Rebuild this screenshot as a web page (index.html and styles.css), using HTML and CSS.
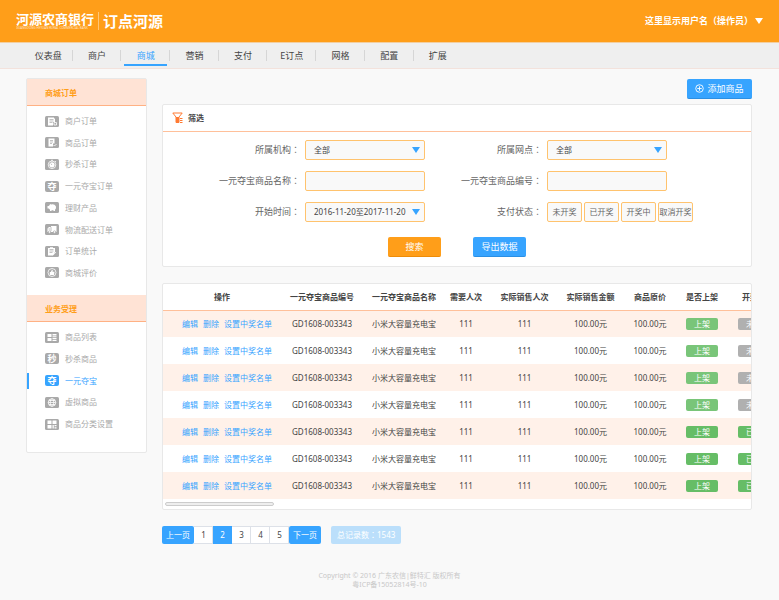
FILE: index.html
```html
<!DOCTYPE html>
<html lang="zh-CN">
<head>
  <meta charset="UTF-8">
  <meta name="viewport" content="width=device-width, initial-scale=1.0">
  <title>一元夺宝</title>
  <link rel="stylesheet" href="styles.css">
</head>
<body>
  <header class="header">
    <div class="logo">
      <div class="bank">
        <strong>河源农商银行</strong>
        <small>GUANGDONG HEYUAN RURAL COMMERCIAL BANK</small>
      </div>
      <span class="product">订点河源</span>
    </div>
    <button class="user" type="button">这里显示用户名<span class="punct" lang="zh-TW">（</span>操作员<span class="punct" lang="zh-TW">）</span><i class="caret"></i></button>
  </header>

  <nav class="nav">
    <a href="#">仪表盘</a>
    <a href="#">商户</a>
    <a href="#" class="active">商城</a>
    <a href="#">营销</a>
    <a href="#">支付</a>
    <a href="#">E订点</a>
    <a href="#">网格</a>
    <a href="#">配置</a>
    <a href="#">扩展</a>
  </nav>

  <div class="layout">
    <aside class="sidebar">
      <h2>商城订单</h2>
      <ul class="menu menu-orders">
        <li><a href="#"><svg class="icon" viewBox="0 0 14 11"><rect width="14" height="11" rx="1.5"/><path class="w" d="M3 1.500h6v1h1v3.500H8v3.500H3z"/><path class="g" d="M4.500 3.500h4M4.500 5h4M4.500 6.500h3"/><path class="l" d="M9 6.500h2.500v2.500H9z"/></svg>商户订单</a></li>
        <li><a href="#"><svg class="icon" viewBox="0 0 14 11"><rect width="14" height="11" rx="1.5"/><path class="w" d="M3.500 1.500h6v5H8v3H3.500z"/><path class="g" d="M5 3.500h3M5 5h3M5 6.500h2"/><path class="l" d="M8.500 8l1 1 2-2"/></svg>商品订单</a></li>
        <li><a href="#"><svg class="icon" viewBox="0 0 14 11"><rect width="14" height="11" rx="1.5"/><circle class="l" cx="7" cy="5.800" r="3.800"/><circle class="w" cx="7" cy="5.800" r="2.600"/><path class="l" d="M6 1.300h2M10 2l1 1"/><path class="g" d="M7 6L5.800 4.500"/></svg>秒杀订单</a></li>
        <li><a href="#"><span class="icon glyph">夺</span>一元夺宝订单</a></li>
        <li><a href="#"><svg class="icon" viewBox="0 0 14 11"><rect width="14" height="11" rx="1.5"/><path class="w" d="M2.500 4h1.200l1-1 .3-1 1.200.6Q8 2 9.500 2.800 11.500 4 11 6.200L10 7.800V9H8.500V8.300H6.500V9H5V7.800L3.800 6.500H2.500z"/></svg>理财产品</a></li>
        <li><a href="#"><svg class="icon" viewBox="0 0 14 11"><rect width="14" height="11" rx="1.5"/><path class="w" d="M2.500 4.500L4 3h2V2h5.500v6h-9z"/><path class="g" d="M6 3v4M3.500 5H5"/><circle class="w ring" cx="4.500" cy="8" r="1.200"/><circle class="w ring" cx="9.500" cy="8" r="1.200"/></svg>物流配送订单</a></li>
        <li><a href="#"><svg class="icon" viewBox="0 0 14 11"><rect width="14" height="11" rx="1.5"/><path class="w" d="M3 2h2v-.7h3V2h2v4L8 9.500H3z"/><path class="g" d="M4.500 3.500h4M4.500 5h4M4.500 6.500h3"/><path class="l" d="M8 9.200L11 6"/></svg>订单统计</a></li>
        <li><a href="#"><svg class="icon" viewBox="0 0 14 11"><rect width="14" height="11" rx="1.5"/><circle class="l" cx="7" cy="5.500" r="4"/><path class="w" d="M4.800 5h1L7 2.800l.8.5L7.500 4.800h2L9 8H4.800z"/></svg>商城评价</a></li>
      </ul>
      <h2>业务受理</h2>
      <ul class="menu menu-service">
        <li><a href="#"><svg class="icon" viewBox="0 0 14 11"><rect width="14" height="11" rx="1.5"/><path class="w" d="M2.500 2h4v3h-4zM2.500 6h4v3h-4zM7.500 2h4v1.500h-4zM7.500 4.300h4v1h-4zM7.500 6h4v1.300h-4zM7.500 8h4v1h-4z"/></svg>商品列表</a></li>
        <li><a href="#"><span class="icon glyph">秒</span>秒杀商品</a></li>
        <li class="active"><a href="#"><span class="icon glyph">夺</span>一元夺宝</a></li>
        <li><a href="#"><svg class="icon" viewBox="0 0 14 11"><rect width="14" height="11" rx="1.5"/><circle class="l" cx="7" cy="5.500" r="3.800"/><ellipse class="l" cx="7" cy="5.500" rx="1.800" ry="3.800"/><path class="l" d="M3.200 5.500h7.600M4 3.500h6M4 7.500h6"/></svg>虚拟商品</a></li>
        <li><a href="#"><svg class="icon" viewBox="0 0 14 11"><rect width="14" height="11" rx="1.5"/><path class="w" d="M2.500 1.500h4v3.500h-4zM7.500 1.500h4v3.500h-4zM2.500 6h4v3.500h-4zM7.500 6h1.300v3.500H7.500zM9.500 6h2v1.300h-2zM9.500 8.200h2v1.300h-2z"/></svg>商品分类设置</a></li>
      </ul>
    </aside>

    <main class="content">
      <div class="toolbar">
        <button class="btn btn-add" type="button">
          <svg viewBox="0 0 10 10"><circle cx="5" cy="5" r="4.200"/><path d="M5 2.500v5M2.500 5h5"/></svg>添加商品
        </button>
      </div>

      <section class="panel">
        <h3 class="panel-title">
          <svg viewBox="0 0 12 12"><path class="line" d="M.8 1h9.400L7 5v5.500H4V5z"/><path class="fill" d="M4 5h3v6H4zM8 6h2.500v1H8zM8 8h2.500v1H8zM8 10h2.500v1H8z"/></svg>筛选
        </h3>
        <form class="filter">
          <label for="org">所属机构<span class="punct" lang="zh-TW">：</span></label>
          <div class="select"><select id="org"><option>全部</option></select></div>
          <label for="branch">所属网点<span class="punct" lang="zh-TW">：</span></label>
          <div class="select"><select id="branch"><option>全部</option></select></div>

          <label for="name">一元夺宝商品名称<span class="punct" lang="zh-TW">：</span></label>
          <input id="name" type="text">
          <label for="code">一元夺宝商品编号<span class="punct" lang="zh-TW">：</span></label>
          <input id="code" type="text">

          <label for="time">开始时间<span class="punct" lang="zh-TW">：</span></label>
          <div class="select"><select id="time"><option>2016-11-20至2017-11-20</option></select></div>
          <label id="state">支付状态<span class="punct" lang="zh-TW">：</span></label>
          <div class="states" role="group" aria-labelledby="state">
            <button type="button">未开奖</button>
            <button type="button">已开奖</button>
            <button type="button">开奖中</button>
            <button type="button">取消开奖</button>
          </div>

          <div class="actions">
            <button class="btn btn-search" type="button">搜索</button>
            <button class="btn" type="button">导出数据</button>
          </div>
        </form>
      </section>

      <section class="panel table-panel">
        <table>
          <colgroup>
            <col class="c-ops"><col class="c-name"><col class="c-name"><col class="c-short"><col class="c-sold">
            <col class="c-sum"><col class="c-price"><col class="c-short"><col class="c-state">
          </colgroup>
          <thead>
            <tr><th>操作</th><th>一元夺宝商品编号</th><th>一元夺宝商品名称</th><th>需要人次</th><th>实际销售人次</th><th>实际销售金额</th><th>商品原价</th><th>是否上架</th><th>开奖状态</th></tr>
          </thead>
          <tbody>
            <tr><td class="ops"><a href="#">编辑</a><a href="#">删除</a><a href="#">设置中奖名单</a></td><td>GD1608-003343</td><td>小米大容量充电宝</td><td>111</td><td>111</td><td>100.00元</td><td>100.00元</td><td><span class="tag">上架</span></td><td><span class="tag wide gray">未开奖</span></td></tr>
            <tr><td class="ops"><a href="#">编辑</a><a href="#">删除</a><a href="#">设置中奖名单</a></td><td>GD1608-003343</td><td>小米大容量充电宝</td><td>111</td><td>111</td><td>100.00元</td><td>100.00元</td><td><span class="tag">上架</span></td><td><span class="tag wide gray">未开奖</span></td></tr>
            <tr><td class="ops"><a href="#">编辑</a><a href="#">删除</a><a href="#">设置中奖名单</a></td><td>GD1608-003343</td><td>小米大容量充电宝</td><td>111</td><td>111</td><td>100.00元</td><td>100.00元</td><td><span class="tag">上架</span></td><td><span class="tag wide gray">未开奖</span></td></tr>
            <tr><td class="ops"><a href="#">编辑</a><a href="#">删除</a><a href="#">设置中奖名单</a></td><td>GD1608-003343</td><td>小米大容量充电宝</td><td>111</td><td>111</td><td>100.00元</td><td>100.00元</td><td><span class="tag">上架</span></td><td><span class="tag wide gray">未开奖</span></td></tr>
            <tr><td class="ops"><a href="#">编辑</a><a href="#">删除</a><a href="#">设置中奖名单</a></td><td>GD1608-003343</td><td>小米大容量充电宝</td><td>111</td><td>111</td><td>100.00元</td><td>100.00元</td><td><span class="tag deep">上架</span></td><td><span class="tag wide deep">已开奖</span></td></tr>
            <tr><td class="ops"><a href="#">编辑</a><a href="#">删除</a><a href="#">设置中奖名单</a></td><td>GD1608-003343</td><td>小米大容量充电宝</td><td>111</td><td>111</td><td>100.00元</td><td>100.00元</td><td><span class="tag deep">上架</span></td><td><span class="tag wide deep">已开奖</span></td></tr>
            <tr><td class="ops"><a href="#">编辑</a><a href="#">删除</a><a href="#">设置中奖名单</a></td><td>GD1608-003343</td><td>小米大容量充电宝</td><td>111</td><td>111</td><td>100.00元</td><td>100.00元</td><td><span class="tag deep">上架</span></td><td><span class="tag wide deep">已开奖</span></td></tr>
          </tbody>
        </table>
        <div class="scroll-thumb"></div>
      </section>

      <div class="pager">
        <div class="pages">
          <a href="#" class="step">上一页</a>
          <a href="#">1</a>
          <a href="#" class="current">2</a>
          <a href="#">3</a>
          <a href="#">4</a>
          <a href="#">5</a>
          <a href="#" class="step">下一页</a>
        </div>
        <span class="total">总记录数<span class="punct" lang="zh-TW">：</span>1543</span>
      </div>
    </main>
  </div>

  <footer class="footer">
    <p>Copyright © 2016 广东农信|鲜特汇 版权所有</p>
    <p>粤ICP备15052814号-10</p>
  </footer>
</body>
</html>
```

FILE: styles.css
```css
* {
  margin: 0;
  padding: 0;
  box-sizing: border-box;
}
body {
  background: #f9f9f9;
  color: #444;
  font-family: "Noto Sans", "Noto Sans CJK SC", sans-serif;
  font-size: 8px;
  line-height: 12px;
}
a {
  color: inherit;
  text-decoration: none;
}
ul {
  list-style: none;
}
button,
input,
select {
  font: inherit;
  color: inherit;
}
button {
  border: none;
  cursor: pointer;
}
.punct {
  font-family: "Noto Sans CJK TC", sans-serif;
}

/* header */
.header {
  display: flex;
  justify-content: space-between;
  align-items: center;
  height: 43px;
  padding: 0 16px;
  background: #ff9e19;
  border-bottom: 1px solid #f3cfa0;
  color: #fff;
}
.logo {
  display: flex;
  align-items: center;
}
.bank {
  padding-right: 4px;
  border-right: 1px solid #ffc675;
}
.bank strong {
  display: block;
  font-size: 13px;
  line-height: 14px;
}
.bank small {
  display: block;
  margin-top: 1px;
  font-size: 3px;
  line-height: 3px;
  opacity: 0.7;
}
.product {
  padding-left: 4px;
  font-size: 15px;
  font-weight: bold;
  line-height: 18px;
}
.user {
  display: flex;
  align-items: center;
  background: none;
  font-size: 9px;
  font-weight: bold;
}
.caret {
  margin-left: 2px;
  border: 4px solid transparent;
  border-top: 6px solid #fff;
  border-bottom: none;
}

/* main nav */
.nav {
  display: flex;
  height: 26px;
  padding-left: 24px;
  background: #efefef;
  border-bottom: 1px solid #f3e2dc;
  font-size: 9px;
}
.nav a {
  display: flex;
  flex-direction: column;
  align-items: center;
  width: 6.25vw;
  padding-top: 7px;
  background: linear-gradient(#d6d6d6, #d6d6d6) right 7px / 1px 11px no-repeat;
}
.nav a:last-child {
  background: none;
}
.nav .active {
  color: #37a4ff;
}
.nav .active::after {
  content: "";
  width: 43px;
  height: 2px;
  margin-top: 2px;
  background: #37a4ff;
}

.layout {
  display: flex;
  align-items: flex-start;
  gap: 15px;
  padding: 9px 27px 0 26px;
}

/* sidebar */
.sidebar {
  flex: 0 0 121px;
  padding-bottom: 6px;
  background: #fff;
  border: 1px solid #e8e8e8;
  border-radius: 2px;
}
.sidebar h2 {
  padding: 1px 0 0 18px;
  background: #ffe3d5;
  border-bottom: 1px solid #ffb184;
  color: #ff9e19;
  font-size: 8px;
  line-height: 25px;
}
.menu {
  display: flex;
  flex-direction: column;
  justify-content: space-between;
  padding: 5px 0 12px;
  color: #a9a9a9;
}
.menu-orders {
  min-height: 189px;
}
.menu-service {
  min-height: 124px;
}
.menu a {
  display: flex;
  align-items: center;
  height: 20px;
  gap: 6px;
  padding-left: 18px;
}
.menu .active a {
  background: linear-gradient(#37a4ff, #37a4ff) left center / 2px 16px no-repeat;
  color: #37a4ff;
}
.icon {
  width: 14px;
  height: 11px;
  fill: #a9a9a9;
}
.icon .w {
  fill: #fff;
}
.icon .g {
  fill: none;
  stroke: #a9a9a9;
  stroke-width: 0.7;
}
.icon .l {
  fill: none;
  stroke: #fff;
  stroke-width: 0.8;
}
.icon .ring {
  stroke: #a9a9a9;
  stroke-width: 0.7;
}
.glyph {
  border-radius: 2px;
  background: #a9a9a9;
  color: #fff;
  font-size: 9px;
  font-weight: bold;
  line-height: 11px;
  text-align: center;
}
.active .glyph {
  background: #37a4ff;
}

/* content */
.content {
  flex: 1;
  min-width: 0;
}
.toolbar {
  display: flex;
  justify-content: flex-end;
  padding-top: 1px;
}
.btn {
  width: 53px;
  height: 20px;
  background: #37a4ff;
  border-bottom: 1px solid #2b8fe3;
  border-radius: 2px;
  color: #fff;
  font-size: 9px;
}
.btn-add {
  display: flex;
  justify-content: center;
  align-items: center;
  gap: 3px;
  width: 65px;
}
.btn-add svg {
  width: 9px;
  height: 9px;
  fill: none;
  stroke: #fff;
}
.btn-search {
  background: #ff9e19;
  border-color: #ee8c08;
}
.panel {
  margin-top: 5px;
  overflow: hidden;
  background: #fff;
  border: 1px solid #e8e8e8;
  border-radius: 2px;
}
.panel-title {
  display: flex;
  align-items: center;
  gap: 4px;
  height: 27px;
  padding-left: 9px;
  border-bottom: 1px solid #ffc09a;
  font-size: 8px;
}
.panel-title svg {
  width: 12px;
  height: 12px;
}
.panel-title .line {
  fill: none;
  stroke: #ff7a33;
}
.panel-title .fill {
  fill: #ff7a33;
}

/* filter form */
.filter {
  display: grid;
  grid-template-columns: 142px 120px 122px 1fr;
  row-gap: 11px;
  padding: 8px 0 9px;
  color: #666;
}
.filter label {
  padding-right: 5px;
  font-size: 9px;
  line-height: 20px;
  text-align: right;
}
.filter input,
.filter select {
  width: 120px;
  height: 20px;
  padding: 0 8px;
  background: #f9f9f9;
  border: 1px solid #ffc36e;
  border-radius: 2px;
  color: #444;
}
.filter select {
  appearance: none;
}
.select {
  display: grid;
  grid-template-columns: 120px;
  align-items: center;
}
.select select,
.select::after {
  grid-area: 1 / 1;
}
.select::after {
  content: "";
  justify-self: end;
  margin-right: 5px;
  border: 4px solid transparent;
  border-top: 6px solid #37a4ff;
  border-bottom: none;
  pointer-events: none;
}
.states {
  display: flex;
  gap: 2px;
}
.states button {
  width: 35px;
  height: 20px;
  background: #f9f9f9;
  border: 1px solid #ffc36e;
  border-radius: 2px;
  white-space: nowrap;
}
.actions {
  grid-column: 1 / -1;
  display: flex;
  justify-content: center;
  gap: 32px;
  padding-top: 4px;
}

/* goods table */
.table-panel {
  margin-top: 16px;
}
table {
  width: 630px;
  table-layout: fixed;
  border-collapse: collapse;
  text-align: center;
  white-space: nowrap;
}
.c-ops { width: 118px; }
.c-name { width: 82px; }
.c-short { width: 42px; }
.c-sold { width: 75px; }
.c-sum { width: 57px; }
.c-price { width: 62px; }
.c-state { width: 70px; }
th {
  height: 26px;
  border-bottom: 1px solid #ffc09a;
}
td {
  height: 27px;
}
tbody tr:nth-child(odd) {
  background: #fff1e9;
}
.ops {
  padding-left: 19px;
  color: #37a4ff;
  text-align: left;
}
.ops a {
  margin-right: 5px;
}
.tag {
  display: inline-block;
  width: 32px;
  background: #79c579;
  border-radius: 2px;
  color: #fff;
}
.tag.wide {
  width: 40px;
}
.tag.deep {
  background: #66bd66;
}
.tag.gray {
  background: #b0b0b0;
}
.scroll-thumb {
  width: 109px;
  height: 4px;
  margin: 3px 2px;
  background: #eee;
  border: 1px solid #ccc;
  border-radius: 2px;
}

/* pagination */
.pager {
  display: flex;
  gap: 10px;
  margin-top: 16px;
  line-height: 18px;
  text-align: center;
}
.pages {
  display: flex;
}
.pages a {
  width: 19px;
  background: #fff;
  box-shadow: inset -1px 0 #dde1e8, inset 0 1px #dde1e8, inset 0 -1px #dde1e8;
}
.pages .step,
.pages .current {
  background: #37a4ff;
  box-shadow: none;
  color: #fff;
}
.pages .step {
  width: 32px;
  border-radius: 2px;
}
.total {
  padding: 0 6px;
  background: #bbdffb;
  border-radius: 2px;
  color: #fff;
}

.footer {
  padding: 27px 0 10px;
  color: #c8c8c8;
  font-size: 7px;
  line-height: 9px;
  text-align: center;
}
```
